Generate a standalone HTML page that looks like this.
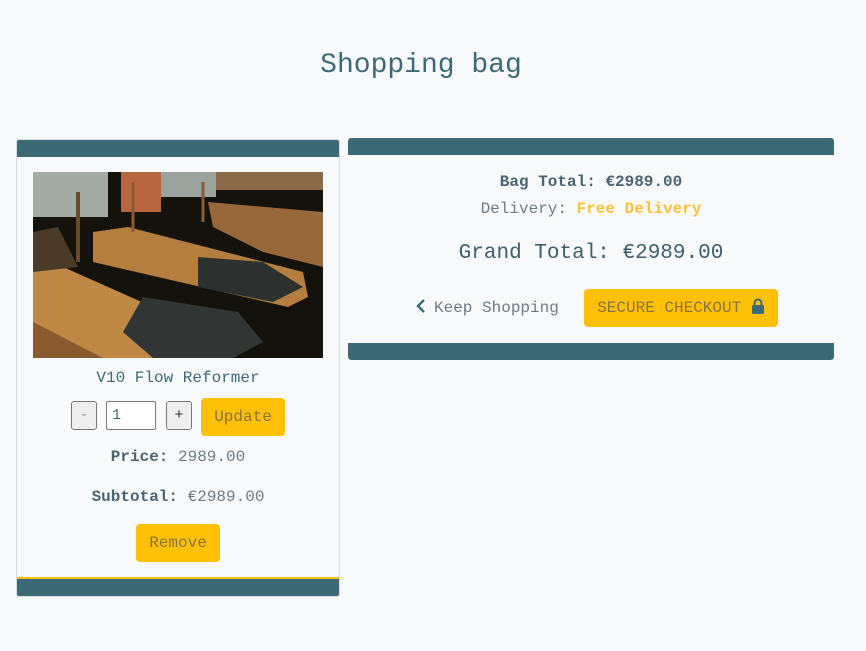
<!DOCTYPE html>
<html><head><meta charset="utf-8"><style>
*{box-sizing:border-box;margin:0;padding:0}
body{width:866px;height:651px;background:#f8f9fa;font-family:"Liberation Mono","DejaVu Sans Mono",monospace;color:#3c6976;position:relative;overflow:hidden}
h1{position:absolute;top:50px;left:0;width:842px;text-align:center;font-weight:normal;font-size:28px;color:#3c6976}
.card{position:absolute;background:#f8f9fa;border:1px solid #dcdcdc;border-radius:3px;overflow:hidden}
.bar{background:#3c6976;height:17px}
.c{position:absolute;left:0;width:100%;text-align:center}
.btn{position:absolute;background:#ffc107;border-radius:4px;color:#8a7440;text-align:center;font-size:16px}
.sq{position:absolute;border:1px solid #777;border-radius:3px;background:#eee;text-align:center;font-size:15px;line-height:27px}
b{font-weight:bold;color:#4a6470}
.g{color:#6c7b85}
</style></head><body>
<h1>Shopping bag</h1>

<div class="card" style="left:16px;top:139px;width:324px;height:458px">
<div class="bar"></div>
<svg style="position:absolute;left:16px;top:32px" width="290" height="186" viewBox="0 0 290 186">
<rect width="290" height="186" fill="#14120c"/>
<rect x="0" y="0" width="75" height="45" fill="#a4aba6"/>
<rect x="88" y="0" width="40" height="40" fill="#b8663e"/>
<rect x="128" y="0" width="55" height="25" fill="#9ca39e"/>
<rect x="183" y="0" width="107" height="18" fill="#8a6a48"/>
<polygon points="60,60 95,55 270,100 275,125 255,135 60,90" fill="#b57e3e"/>
<polygon points="175,30 290,40 290,95 230,80 180,55" fill="#99683a"/>
<polygon points="0,100 30,95 120,135 170,186 0,186" fill="#bf8845"/>
<polygon points="0,150 70,186 0,186" fill="#8a5a2e"/>
<polygon points="165,85 230,90 270,115 240,130 165,115" fill="#2c302e"/>
<polygon points="110,125 205,140 230,170 200,186 120,186 90,160" fill="#313533"/>
<polygon points="0,60 25,55 45,95 0,100" fill="#4a3a28"/>
<line x1="45" y1="20" x2="45" y2="90" stroke="#6b4a2a" stroke-width="4"/>
<line x1="100" y1="10" x2="100" y2="60" stroke="#8a5a30" stroke-width="3"/>
<line x1="170" y1="10" x2="170" y2="50" stroke="#8a5a30" stroke-width="3"/>
</svg>
<div class="c" style="top:229px;font-size:16px">V10 Flow Reformer</div>
<div class="sq" style="left:54px;top:261px;width:26px;height:29px;color:#999">-</div>
<div style="position:absolute;left:89px;top:261px;width:50px;height:29px;border:1px solid #777;border-radius:2px;background:#fff;font-size:15px;line-height:27px;padding-left:5px">1</div>
<div class="sq" style="left:149px;top:261px;width:26px;height:29px;color:#333">+</div>
<div class="btn" style="left:184px;top:258px;width:84px;height:38px;line-height:38px">Update</div>
<div class="c" style="top:308px;font-size:16px"><b>Price:</b> <span class="g">2989.00</span></div>
<div class="c" style="top:348px;font-size:16px"><b>Subtotal:</b> <span class="g">€2989.00</span></div>
<div class="btn" style="left:119px;top:384px;width:84px;height:38px;line-height:38px">Remove</div>
<div style="position:absolute;left:0;bottom:0;width:100%;height:19px;background:#3c6976;border-top:2px solid #ffc107"></div>
</div>

<div class="card" style="left:348px;top:138px;width:486px;height:222px;border:none">
<div class="bar"></div>
<div class="c" style="top:35px;font-size:16px"><b>Bag Total: €2989.00</b></div>
<div class="c" style="top:62px;font-size:16px"><span class="g">Delivery:</span> <b style="color:#ffc13b">Free Delivery</b></div>
<div class="c" style="top:104px;font-size:21px;color:#3f5f6b">Grand Total: €2989.00</div>
<div style="position:absolute;left:68px;top:161px;font-size:16px;color:#6c7b85"><svg width="10" height="14" viewBox="0 0 10 14" style="vertical-align:-1px;margin-right:8px"><path d="M8 1L2 7l6 6" stroke="#3c6976" stroke-width="2.4" fill="none"/></svg>Keep Shopping</div>
<div class="btn" style="left:236px;top:151px;width:194px;height:38px;line-height:38px">SECURE CHECKOUT <svg width="14" height="16" viewBox="0 0 14 16" style="vertical-align:-2px"><path d="M3.5 7V5a3.5 3.5 0 0 1 7 0v2" stroke="#3c6976" stroke-width="2" fill="none"/><rect x="1" y="7" width="12" height="9" rx="1.5" fill="#3c6976"/></svg></div>
<div style="position:absolute;left:0;bottom:0;width:100%;height:17px;background:#3c6976;border-radius:0 0 3px 3px"></div>
</div>
</body></html>
